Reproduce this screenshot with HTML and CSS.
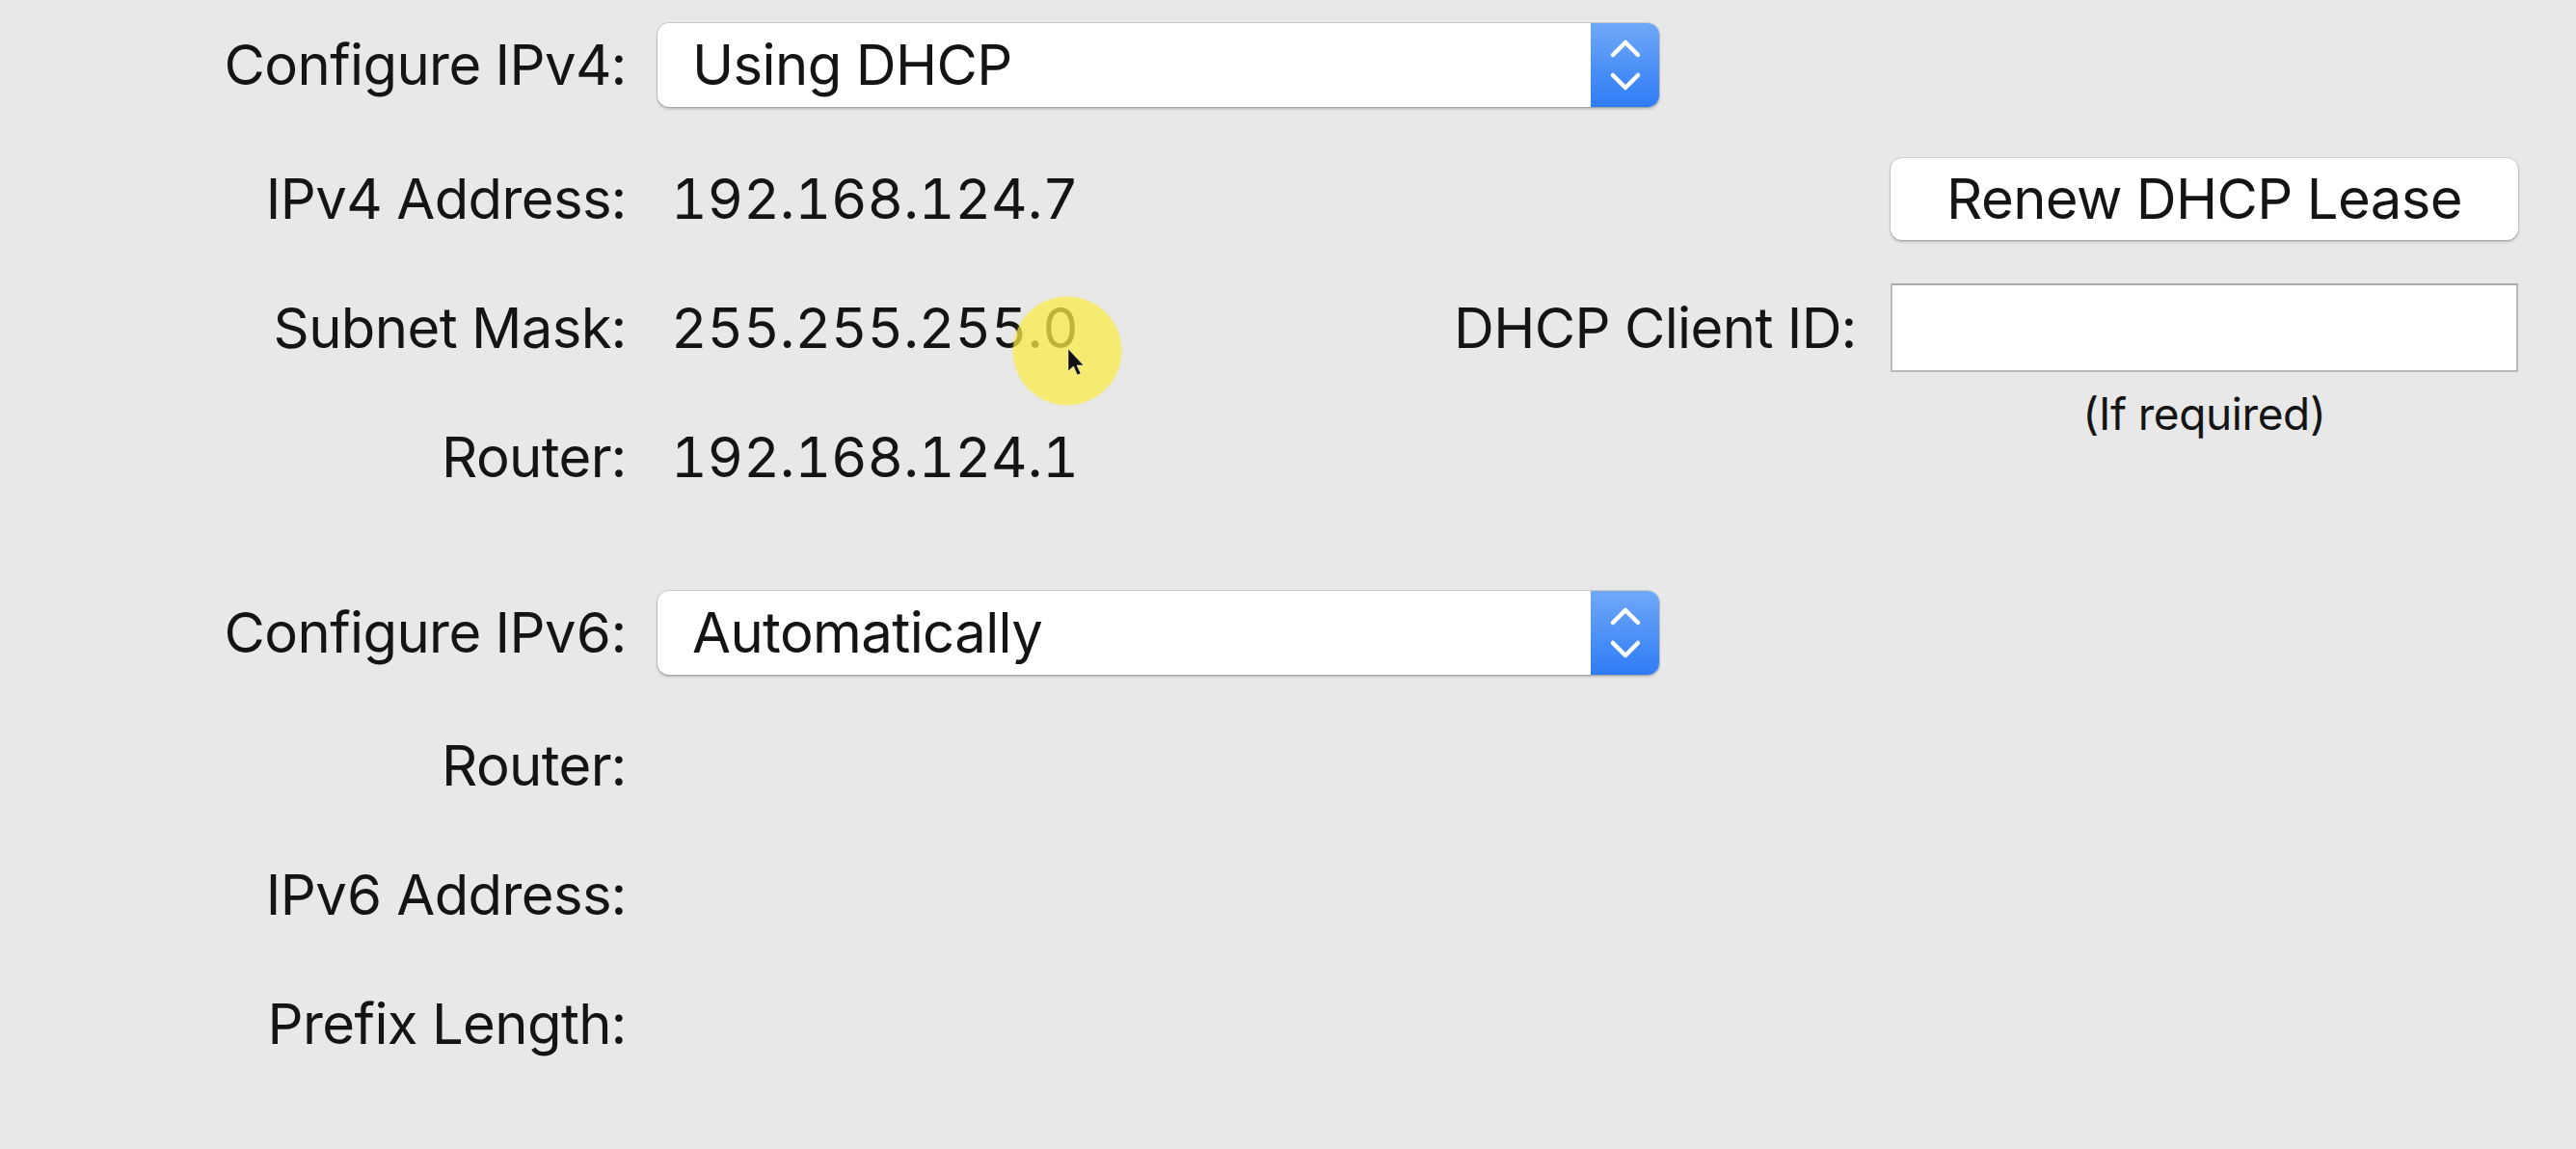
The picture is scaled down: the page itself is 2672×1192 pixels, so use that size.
FILE: index.html
```html
<!DOCTYPE html>
<html lang="en">
<head>
<meta charset="utf-8">
<title>Network – TCP/IP</title>
<link rel="stylesheet" href="styles.css">
</head>
<body>
<main class="panel">
  <div class="row popup-row">
    <span class="label">Configure IPv4:</span>
    <div class="popup">
      <span class="popup-text">Using DHCP</span>
      <span class="stepper">
        <svg viewBox="0 0 71 87" width="71" height="87" aria-hidden="true">
          <path d="M23 33 L36 20 L49 33" />
          <path d="M23 54 L36 67 L49 54" />
        </svg>
      </span>
    </div>
  </div>

  <div class="section">
    <div class="fields">
      <div class="row"><span class="label">IPv4 Address:</span><span class="value">192.168.124.7</span></div>
      <div class="row"><span class="label">Subnet Mask:</span><span class="value">255.255.255.0</span></div>
      <div class="row"><span class="label">Router:</span><span class="value">192.168.124.1</span></div>
    </div>
    <div class="dhcp">
      <button class="btn" type="button">Renew DHCP Lease</button>
      <span class="dhcp-label">DHCP Client ID:</span>
      <input class="text-input" type="text" aria-label="DHCP Client ID">
      <span class="hint">(If required)</span>
    </div>
  </div>

  <div class="row popup-row v6">
    <span class="label">Configure IPv6:</span>
    <div class="popup">
      <span class="popup-text">Automatically</span>
      <span class="stepper">
        <svg viewBox="0 0 71 87" width="71" height="87" aria-hidden="true">
          <path d="M23 33 L36 20 L49 33" />
          <path d="M23 54 L36 67 L49 54" />
        </svg>
      </span>
    </div>
  </div>

  <div class="row"><span class="label">Router:</span></div>
  <div class="row"><span class="label">IPv6 Address:</span></div>
  <div class="row"><span class="label">Prefix Length:</span></div>
</main>

<div class="highlight"></div>
<svg class="cursor" viewBox="0 0 20 30" width="20" height="30" aria-hidden="true">
  <path d="M1 1 L1 24 L6.5 19 L10.5 28 L14 26.5 L10 18 L17 18 Z" />
</svg>
</body>
</html>
```

FILE: styles.css
```css
* { box-sizing: border-box; }

html, body {
  margin: 0;
  padding: 0;
  background: #e8e8e8;
}

body {
  width: 2672px;
  height: 1192px;
  overflow: hidden;
  position: relative;
  font-family: "Inter", "Liberation Sans", sans-serif;
  font-size: 58px;
  letter-spacing: -0.6px;
  font-variant-numeric: tabular-nums;
  color: #141414;
}

.panel {
  display: flex;
  flex-direction: column;
}

.row {
  display: flex;
  align-items: center;
  height: 134px;
}

.label {
  width: 649px;
  flex: none;
  text-align: right;
  white-space: nowrap;
}

.value {
  margin-left: 47px;
  white-space: nowrap;
  letter-spacing: 0;
}

.popup {
  margin-left: 33px;
  width: 1039px;
  height: 87px;
  display: flex;
  align-items: center;
  background: #ffffff;
  border-radius: 12px;
  box-shadow: 0 0 0 1px rgba(0, 0, 0, 0.12), 0 2px 3px rgba(0, 0, 0, 0.22);
}

.popup-text {
  flex: 1;
  padding-left: 36px;
  white-space: nowrap;
}

.stepper {
  width: 71px;
  height: 87px;
  flex: none;
  border-radius: 0 12px 12px 0;
  background: linear-gradient(#6fa8f7, #2f7cf6);
}

.stepper svg {
  display: block;
}

.stepper path {
  fill: none;
  stroke: #ffffff;
  stroke-width: 4.5;
  stroke-linecap: round;
  stroke-linejoin: round;
}

.section {
  display: flex;
  justify-content: space-between;
  margin-top: 5px;
  padding-right: 60px;
}

.dhcp {
  display: grid;
  grid-template-columns: auto 651px;
  grid-template-rows: 134px 134px 44px;
  column-gap: 36px;
  align-items: center;
}

.btn {
  grid-column: 2;
  grid-row: 1;
  height: 85px;
  font: inherit;
  letter-spacing: inherit;
  color: inherit;
  background: #ffffff;
  border: none;
  border-radius: 12px;
  box-shadow: 0 0 0 1px rgba(0, 0, 0, 0.1), 0 2px 3px rgba(0, 0, 0, 0.22);
  padding: 0;
}

.dhcp-label {
  grid-column: 1;
  grid-row: 2;
  text-align: right;
  white-space: nowrap;
}

.text-input {
  grid-column: 2;
  grid-row: 2;
  height: 92px;
  width: 651px;
  background: #ffffff;
  border: 2px solid #b9b9b9;
  border-top-color: #a9a9a9;
  border-radius: 0;
  font: inherit;
  outline: none;
}

.hint {
  grid-column: 2;
  grid-row: 3;
  text-align: center;
  font-size: 46px;
  line-height: 44px;
  letter-spacing: -0.4px;
}

.v6 {
  margin-top: 48px;
  margin-bottom: 4px;
}

.highlight {
  position: absolute;
  left: 1051px;
  top: 308px;
  width: 112px;
  height: 112px;
  border-radius: 50%;
  background: rgba(250, 236, 72, 0.74);
  box-shadow: 0 0 3px rgba(250, 236, 72, 0.6);
}

.cursor {
  position: absolute;
  left: 1107px;
  top: 361px;
}

.cursor path {
  fill: #111111;
  stroke: rgba(255, 255, 255, 0.5);
  stroke-width: 1;
}
```
